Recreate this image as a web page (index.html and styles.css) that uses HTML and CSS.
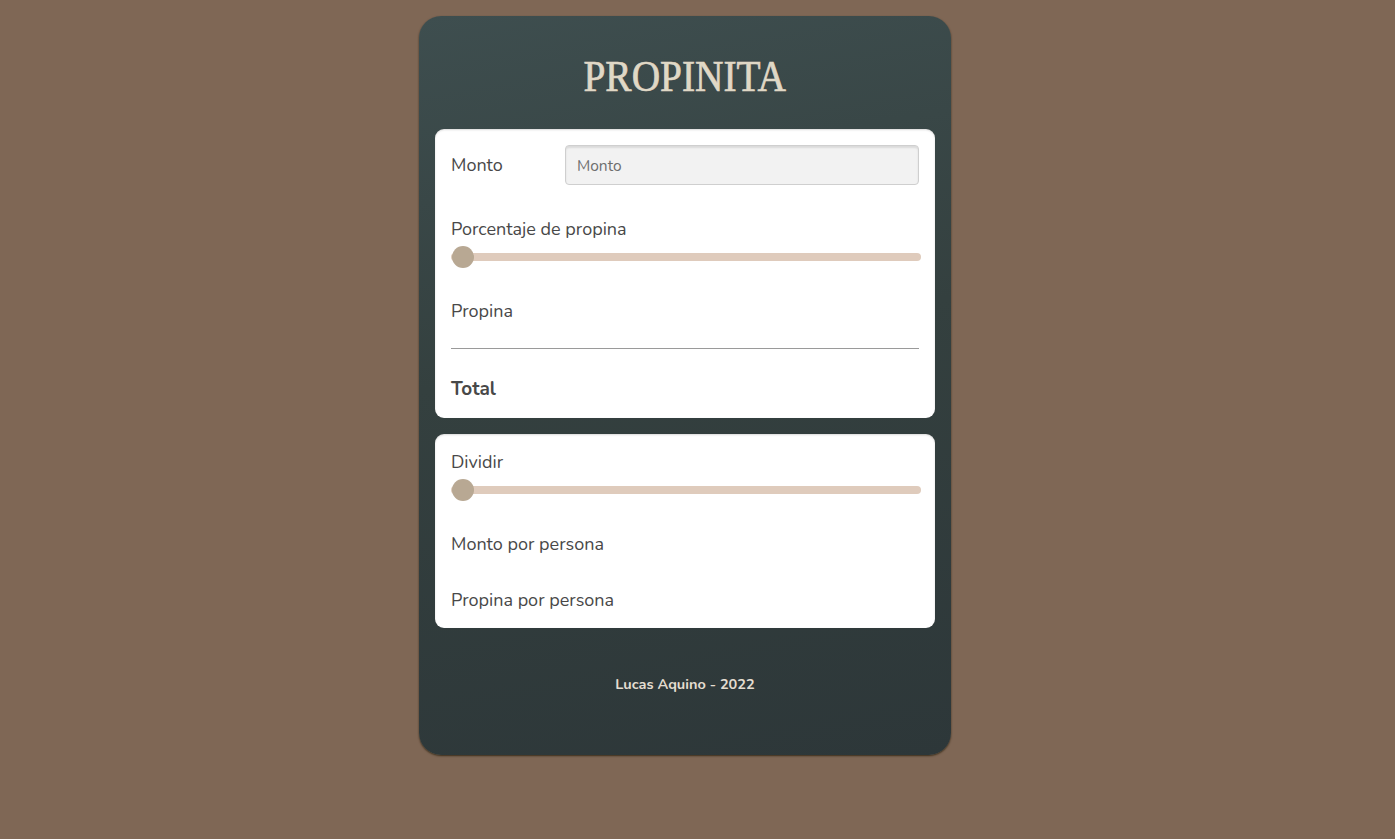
FILE: index.html
```html
<!DOCTYPE html>
<html lang="es">
<head>
<meta charset="utf-8">
<title>Propinita</title>
<link rel="stylesheet" href="styles.css">
</head>
<body>
<main class="card">
  <h1 class="title"><span class="title-text">PROPINITA</span></h1>
  <section class="panel">
    <div class="row">
      <label class="label" for="monto">Monto</label>
      <input class="input" id="monto" type="text" placeholder="Monto">
    </div>
    <div class="field">
      <div class="label">Porcentaje de propina</div>
      <input class="range" type="range" min="0" max="100" value="0">
    </div>
    <div class="label line">Propina</div>
    <hr class="sep">
    <div class="label total">Total</div>
  </section>
  <section class="panel second">
    <div class="field first">
      <div class="label">Dividir</div>
      <input class="range" type="range" min="1" max="20" value="1">
    </div>
    <div class="label line">Monto por persona</div>
    <div class="label line last">Propina por persona</div>
  </section>
  <footer class="footer">Lucas Aquino - 2022</footer>
</main>
</body>
</html>
```
FILE: styles.css
```css
* { box-sizing: border-box; }
html, body { margin: 0; }
body {
  background: #7f6755;
  font-family: "Nunito", "Open Sans", "Noto Sans", sans-serif;
  min-height: 839px;
  display: flex;
  justify-content: center;
  align-items: flex-start;
  padding: 16px 25px 0 0;
}
.card {
  width: 532px;
  height: 739px;
  border-radius: 22px;
  background: linear-gradient(170deg, #3e4e4f 0%, #34403f 45%, #2d3739 100%);
  box-shadow: 0 1px 2px rgba(40, 30, 10, 0.8);
  padding: 0 16px;
  display: flex;
  flex-direction: column;
}
.title {
  margin: 34px 0 0;
  height: 79px;
  text-align: center;
  font-family: "Liberation Serif", "Times New Roman", serif;
  font-weight: normal;
  font-size: 45px;
  line-height: 52px;
  color: #e0d8c6;
}
.title-text {
  display: inline-block;
  transform: scaleX(0.875);
  -webkit-text-stroke: 0.7px #e0d8c6;
}
.panel {
  background: #fff;
  border-radius: 9px;
  padding: 16px 16px 0;
  margin-bottom: 16px;
  box-shadow: inset 0 1px 2px rgba(0,0,0,0.15);
}
.label {
  font-size: 18px;
  color: #484848;
  line-height: 24px;
}
.row {
  display: flex;
  align-items: center;
  height: 40px;
}
.row .label { width: 114px; }
.input {
  flex: 1;
  height: 40px;
  background: #f2f2f2;
  border: 1px solid #cfcfcf;
  border-radius: 4px;
  box-shadow: inset 0 2px 2px rgba(0,0,0,0.1);
  padding: 0 11px;
  font-family: inherit;
  font-size: 15.5px;
  color: #555;
}
.input::placeholder { color: #6e6e6e; }
.field { margin-top: 32px; }
.field.first { margin-top: 0; }
.range {
  -webkit-appearance: none;
  appearance: none;
  display: block;
  width: 470px;
  height: 8px;
  margin: 12px 0 0;
  background: #dfcbbc;
  border-radius: 4px;
  outline: none;
}
.range::-webkit-slider-thumb {
  -webkit-appearance: none;
  appearance: none;
  width: 22px;
  height: 22px;
  border-radius: 50%;
  background: #b8a893;
  border: none;
  margin-left: 1px;
}
.line { margin-top: 38px; }
.sep {
  border: none;
  border-top: 1px solid #9a9a9a;
  margin: 25px 0 0;
  width: 468px;
}
.total {
  font-weight: bold;
  font-size: 19px;
  margin-top: 28px;
  padding-bottom: 17px;
}
.panel .line.last { margin-top: 32px; padding-bottom: 16px; }
.footer {
  margin-top: 30px;
  text-align: center;
  font-weight: bold;
  font-size: 14.5px;
  color: #e4ddd0;
}
```
